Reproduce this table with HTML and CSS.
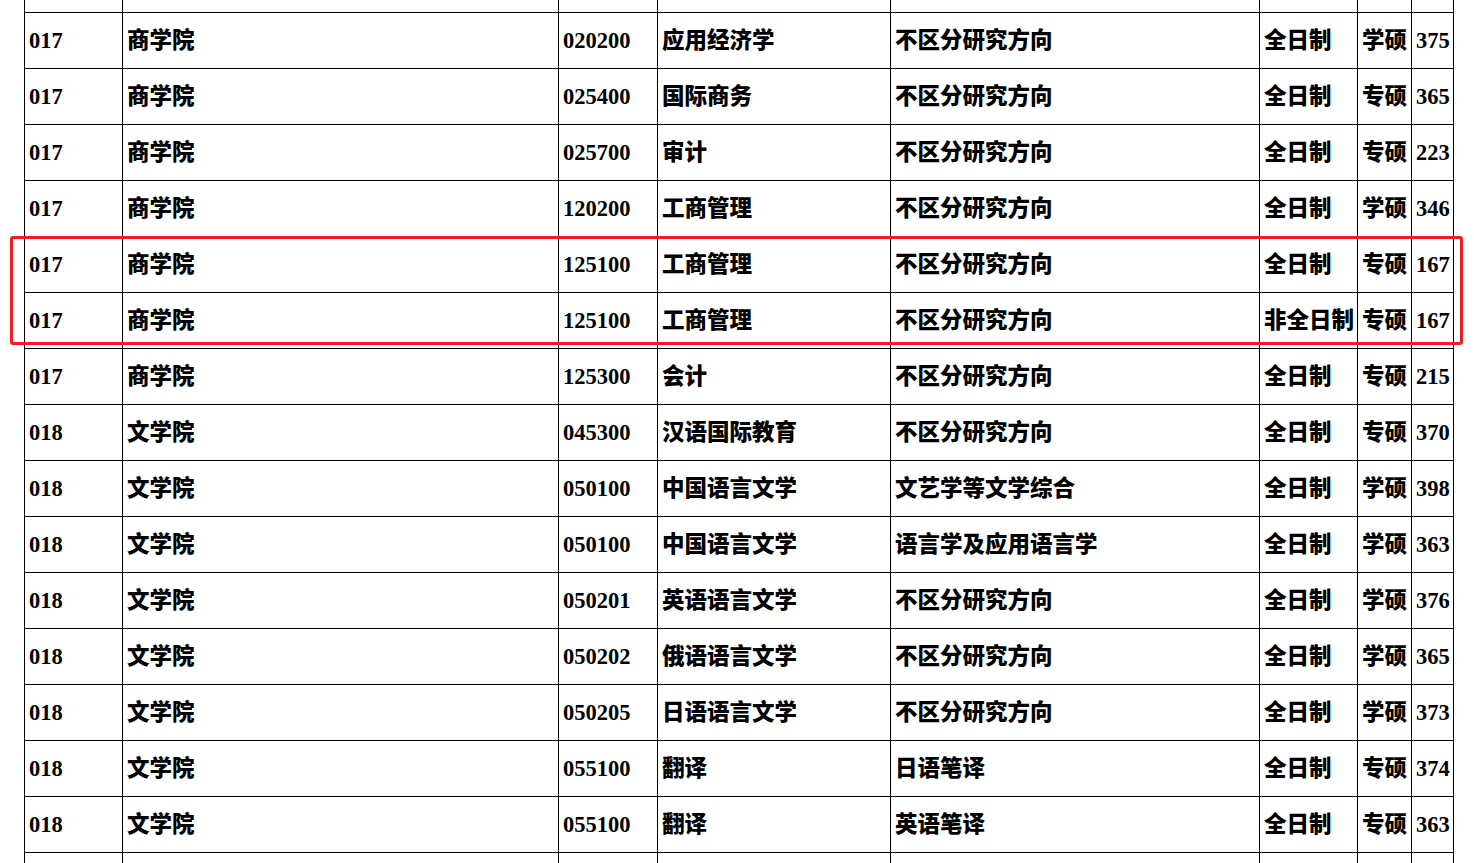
FILE: index.html
```html
<!DOCTYPE html>
<html lang="zh-CN">
<head>
<meta charset="utf-8">
<title>招生专业目录</title>
<link rel="stylesheet" href="styles.css">
</head>
<body>
<div class="page">
  <table class="grid">
    <colgroup>
      <col class="c-code"><col class="c-school"><col class="c-mcode"><col class="c-major">
      <col class="c-dir"><col class="c-mode"><col class="c-type"><col class="c-num">
    </colgroup>
    <tbody>
      <tr><td></td><td></td><td></td><td></td><td></td><td></td><td></td><td></td></tr>
      <tr><td>017</td><td>商学院</td><td>020200</td><td>应用经济学</td><td>不区分研究方向</td><td>全日制</td><td>学硕</td><td>375</td></tr>
      <tr><td>017</td><td>商学院</td><td>025400</td><td>国际商务</td><td>不区分研究方向</td><td>全日制</td><td>专硕</td><td>365</td></tr>
      <tr><td>017</td><td>商学院</td><td>025700</td><td>审计</td><td>不区分研究方向</td><td>全日制</td><td>专硕</td><td>223</td></tr>
      <tr><td>017</td><td>商学院</td><td>120200</td><td>工商管理</td><td>不区分研究方向</td><td>全日制</td><td>学硕</td><td>346</td></tr>
      <tr><td>017</td><td>商学院</td><td>125100</td><td>工商管理</td><td>不区分研究方向</td><td>全日制</td><td>专硕</td><td>167</td></tr>
      <tr><td>017</td><td>商学院</td><td>125100</td><td>工商管理</td><td>不区分研究方向</td><td>非全日制</td><td>专硕</td><td>167</td></tr>
      <tr><td>017</td><td>商学院</td><td>125300</td><td>会计</td><td>不区分研究方向</td><td>全日制</td><td>专硕</td><td>215</td></tr>
      <tr><td>018</td><td>文学院</td><td>045300</td><td>汉语国际教育</td><td>不区分研究方向</td><td>全日制</td><td>专硕</td><td>370</td></tr>
      <tr><td>018</td><td>文学院</td><td>050100</td><td>中国语言文学</td><td>文艺学等文学综合</td><td>全日制</td><td>学硕</td><td>398</td></tr>
      <tr><td>018</td><td>文学院</td><td>050100</td><td>中国语言文学</td><td>语言学及应用语言学</td><td>全日制</td><td>学硕</td><td>363</td></tr>
      <tr><td>018</td><td>文学院</td><td>050201</td><td>英语语言文学</td><td>不区分研究方向</td><td>全日制</td><td>学硕</td><td>376</td></tr>
      <tr><td>018</td><td>文学院</td><td>050202</td><td>俄语语言文学</td><td>不区分研究方向</td><td>全日制</td><td>学硕</td><td>365</td></tr>
      <tr><td>018</td><td>文学院</td><td>050205</td><td>日语语言文学</td><td>不区分研究方向</td><td>全日制</td><td>学硕</td><td>373</td></tr>
      <tr><td>018</td><td>文学院</td><td>055100</td><td>翻译</td><td>日语笔译</td><td>全日制</td><td>专硕</td><td>374</td></tr>
      <tr><td>018</td><td>文学院</td><td>055100</td><td>翻译</td><td>英语笔译</td><td>全日制</td><td>专硕</td><td>363</td></tr>
      <tr><td></td><td></td><td></td><td></td><td></td><td></td><td></td><td></td></tr>
    </tbody>
  </table>
  <div class="highlight"></div>
</div>
</body>
</html>
```

FILE: styles.css
```css
html, body {
  margin: 0;
  padding: 0;
  background: #ffffff;
}

.page {
  position: relative;
  width: 1474px;
  height: 863px;
  overflow: hidden;
  padding-left: 24px;
  box-sizing: border-box;
}

.grid {
  border-collapse: collapse;
  table-layout: fixed;
  width: 1429px;
  margin-top: -44px;
  font-family: "Liberation Serif", "Noto Sans CJK SC", serif;
  font-weight: 900;
  font-size: 22.5px;
  color: #000000;
}

.c-code { width: 98px; }
.c-school { width: 436px; }
.c-mcode { width: 99px; }
.c-major { width: 233px; }
.c-dir { width: 369px; }
.c-mode { width: 98px; }
.c-type { width: 54px; }
.c-num { width: 42px; }

.grid tr {
  height: 56px;
}

.grid td {
  border: 1px solid #000000;
  padding: 2px 0 0 4px;
  white-space: nowrap;
  overflow: hidden;
  vertical-align: middle;
  line-height: 1;
}

.highlight {
  position: absolute;
  left: 10px;
  top: 236px;
  width: 1453px;
  height: 109px;
  box-sizing: border-box;
  border: 3px solid #f01e1e;
  border-radius: 3px;
  pointer-events: none;
}
```
